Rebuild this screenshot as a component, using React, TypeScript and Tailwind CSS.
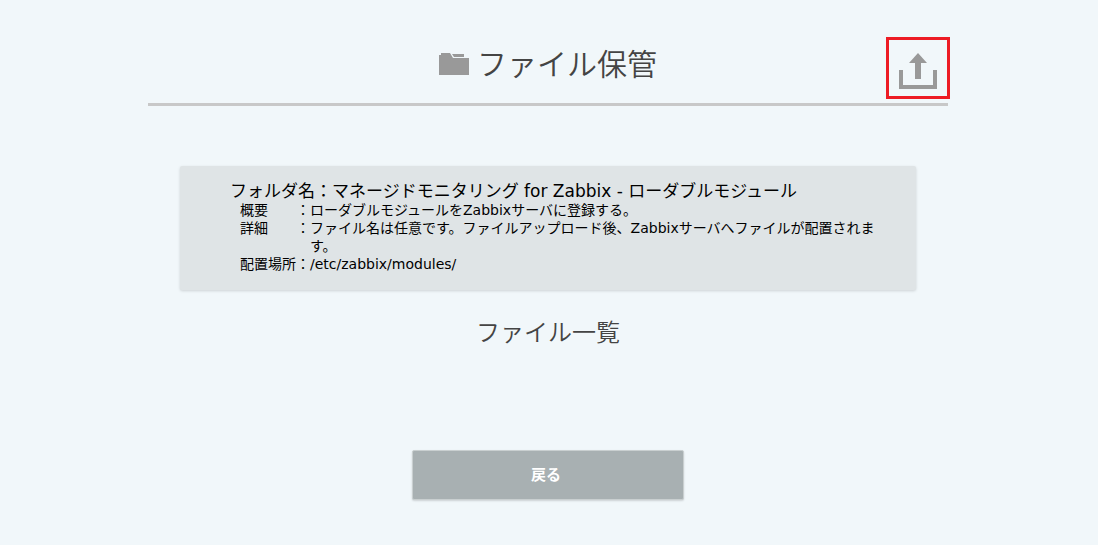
import React from "react";

const details = [
  { label: "概要", value: "ローダブルモジュールをZabbixサーバに登録する。" },
  {
    label: "詳細",
    value:
      "ファイル名は任意です。ファイルアップロード後、Zabbixサーバへファイルが配置されます。",
  },
  { label: "配置場所", value: "/etc/zabbix/modules/" },
];

function FolderIcon() {
  return (
    <svg width="30" height="22" viewBox="0 0 30 22" fill="#999999" aria-hidden="true">
      <path d="M0 2h2V0h9l3 5h16v17H0z" />
      <path d="M13 1h12v3H15z" />
    </svg>
  );
}

function UploadIcon() {
  return (
    <svg width="38" height="36" viewBox="0 0 38 36" fill="#999999" aria-hidden="true">
      <path d="M19 0l9 10h-6v16h-6V10h-6z" />
      <path d="M0 17h4v15h30V17h4v19H0z" />
    </svg>
  );
}

export default function App() {
  return (
    <div className="min-h-screen bg-[#f1f7fa] pr-[18px] pb-11 pl-4 font-['DejaVu_Sans','Noto_Sans_CJK_JP',sans-serif] text-black">
      <main className="mx-auto flex max-w-[800px] flex-col items-center">
        <header className="relative flex h-[106px] w-full items-start justify-center border-b-3 border-[#c8c8c8] pt-[42px]">
          <h1 className="flex items-center gap-2 font-['Noto_Sans','Noto_Sans_CJK_JP',sans-serif] text-[30px] leading-[44px] font-[350] text-[#444444]">
            <FolderIcon />
            ファイル保管
          </h1>
          <button
            type="button"
            aria-label="アップロード"
            className="absolute top-[37px] -right-0.5 flex h-[62px] w-16 items-end justify-center border-3 border-[#ed1c24] pb-[7px]"
          >
            <UploadIcon />
          </button>
        </header>

        <section className="mt-[60px] w-[92%] rounded-xs bg-[#dfe4e6] pt-[15px] pr-8 pb-[17px] pl-[50px] shadow-[0_1px_3px_rgba(0,0,0,0.15)]">
          <h2 className="text-[17px] leading-5 font-normal">
            フォルダ名：マネージドモニタリング for Zabbix - ローダブルモジュール
          </h2>
          <dl className="pl-[10px] text-sm leading-[18px] font-normal">
            {details.map((d) => (
              <div key={d.label} className="flex">
                <dt className="flex w-[70px] shrink-0 justify-between">
                  <span>{d.label}</span>
                  <span>：</span>
                </dt>
                <dd>{d.value}</dd>
              </div>
            ))}
          </dl>
        </section>

        <h2 className="mt-[24px] font-['Noto_Sans','Noto_Sans_CJK_JP',sans-serif] text-2xl leading-9 font-[350] text-[#444444]">
          ファイル一覧
        </h2>

        <button
          type="button"
          className="mt-[100px] h-[50px] w-[272px] rounded-xs border border-[#c9cfd0] bg-[#a8b0b2] pr-1 text-[15px] font-bold text-white shadow-[0_1px_2px_rgba(0,0,0,0.15)]"
        >
          戻る
        </button>
      </main>
    </div>
  );
}
